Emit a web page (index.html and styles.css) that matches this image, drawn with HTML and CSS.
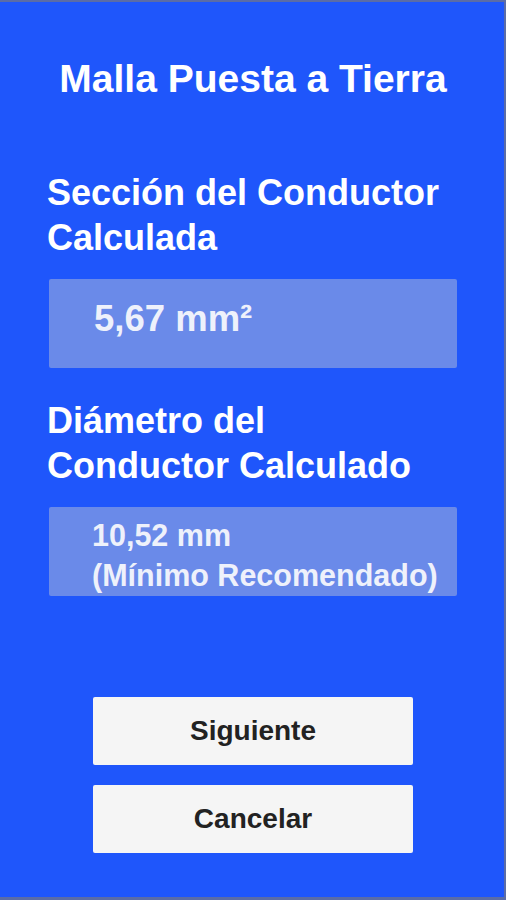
FILE: index.html
```html
<!DOCTYPE html>
<html lang="es">
<head>
<meta charset="utf-8">
<title>Malla Puesta a Tierra</title>
<link rel="stylesheet" href="styles.css">
</head>
<body>
<div class="screen">
  <h1 class="title">Malla Puesta a Tierra</h1>
  <section class="content">
    <h2 class="label label-first">Sección del Conductor<br>Calculada</h2>
    <div class="result result-single">5,67 mm²</div>
    <h2 class="label label-second">Diámetro del<br>Conductor Calculado</h2>
    <div class="result result-double">10,52 mm<br>(Mínimo Recomendado)</div>
  </section>
  <div class="actions">
    <button class="btn">Siguiente</button>
    <button class="btn">Cancelar</button>
  </div>
</div>
</body>
</html>
```
FILE: styles.css
```css
html, body {
  margin: 0;
  padding: 0;
}
body {
  background: #5b6ca6;
  font-family: "Liberation Sans", Arial, Helvetica, sans-serif;
}
.screen {
  box-sizing: border-box;
  height: 900px;
  background: #1f56fb;
  border-top: 2px solid #5b6ca6;
  border-right: 2px solid #5b6ca6;
  border-bottom: 3px solid #5b6ca6;
  color: #ffffff;
  display: flex;
  flex-direction: column;
}
.title {
  margin: 0;
  padding-top: 55px;
  padding-left: 2px;
  font-size: 39px;
  line-height: 44px;
  font-weight: bold;
  text-align: center;
}
.content {
  padding: 0 0 0 47px;
  display: flex;
  flex-direction: column;
}
.label {
  margin: 0;
  font-size: 36px;
  line-height: 45px;
  font-weight: bold;
}
.label-first {
  margin-top: 69px;
}
.label-second {
  margin-top: 30px;
}
.result {
  box-sizing: border-box;
  margin-top: 19px;
  margin-left: 2px;
  width: 408px;
  height: 89px;
  background: #6a8ae9;
  border-radius: 2px;
  color: #eef1fb;
  font-weight: bold;
}
.result-single {
  padding: 20px 0 0 45px;
  font-size: 36.5px;
  line-height: 40px;
}
.result-double {
  padding: 8px 0 0 43px;
  font-size: 30.5px;
  line-height: 40px;
}
.actions {
  margin-top: 101px;
  padding-left: 2px;
  display: flex;
  flex-direction: column;
  align-items: center;
  gap: 20px;
}
.btn {
  width: 320px;
  height: 68px;
  border: none;
  border-radius: 2px;
  background: #f5f5f5;
  color: #222222;
  font-family: "Liberation Sans", Arial, Helvetica, sans-serif;
  font-size: 28px;
  font-weight: bold;
  padding: 0;
}
```
